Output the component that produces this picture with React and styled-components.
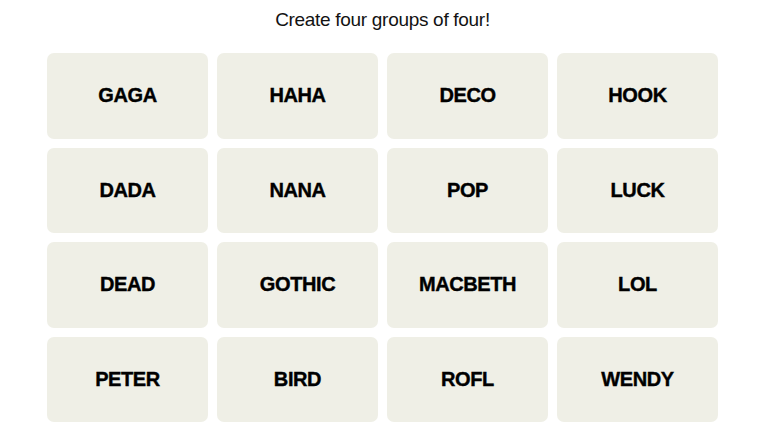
import React from "react";
import styled, { createGlobalStyle } from "styled-components";

const Global = createGlobalStyle`
  html, body { margin: 0; padding: 0; background: #ffffff; }
  body { font-family: "Liberation Sans", Arial, sans-serif; color: #000; }
`;

const Page = styled.div`
  width: 768px;
  height: 434px;
  display: flex;
  flex-direction: column;
  align-items: flex-start;
  padding: 8px 0 0 47px;
  box-sizing: border-box;
`;

const Title = styled.h1`
  margin: 0 0 23px 0;
  width: 671px;
  height: 22px;
  text-align: center;
  font-family: "Liberation Sans", Arial, sans-serif;
  font-weight: 400;
  font-size: 19px;
  line-height: 24px;
  letter-spacing: -0.3px;
  color: #121212;
`;

const Grid = styled.div`
  display: grid;
  grid-template-columns: repeat(4, 161px);
  grid-auto-rows: 85.5px;
  column-gap: 9px;
  row-gap: 9px;
`;

const Tile = styled.button`
  border: none;
  border-radius: 7px;
  background: #efefe6;
  display: flex;
  align-items: center;
  justify-content: center;
  font-family: "Liberation Sans", Arial, sans-serif;
  font-weight: 700;
  font-size: 20px;
  letter-spacing: -0.4px;
  -webkit-text-stroke: 0.4px #000;
  text-transform: uppercase;
  color: #000;
  padding: 0;
  cursor: pointer;
`;

const words = [
  "GAGA", "HAHA", "DECO", "HOOK",
  "DADA", "NANA", "POP", "LUCK",
  "DEAD", "GOTHIC", "MACBETH", "LOL",
  "PETER", "BIRD", "ROFL", "WENDY",
];

export default function App() {
  return (
    <>
      <Global />
      <Page>
        <Title>Create four groups of four!</Title>
        <Grid>
          {words.map((w) => (
            <Tile key={w}>{w}</Tile>
          ))}
        </Grid>
      </Page>
    </>
  );
}
